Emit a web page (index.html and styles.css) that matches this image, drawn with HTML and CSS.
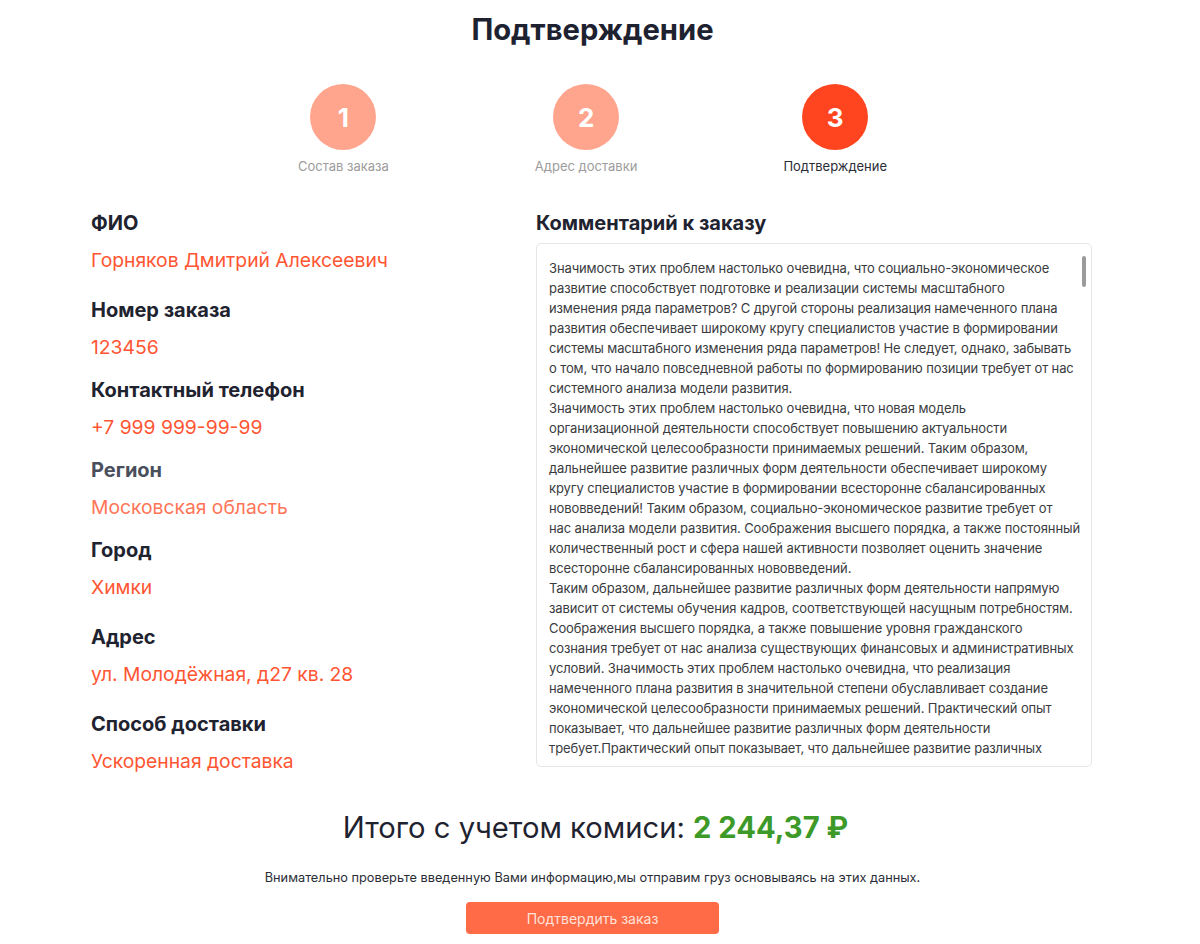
FILE: index.html
```html
<!DOCTYPE html>
<html lang="ru">
<head>
<meta charset="utf-8">
<title>Подтверждение</title>
<link rel="stylesheet" href="styles.css">
</head>
<body>
<div class="page">
  <h1 class="title">Подтверждение</h1>

  <div class="steps">
    <div class="step step--done">
      <div class="step__circle">1</div>
      <div class="step__label">Состав заказа</div>
    </div>
    <div class="step step--done">
      <div class="step__circle">2</div>
      <div class="step__label">Адрес доставки</div>
    </div>
    <div class="step step--active">
      <div class="step__circle">3</div>
      <div class="step__label">Подтверждение</div>
    </div>
  </div>

  <div class="content">
    <div class="fields">
      <div class="field field--spaced">
        <div class="field__label">ФИО</div>
        <div class="field__value">Горняков Дмитрий Алексеевич</div>
      </div>
      <div class="field">
        <div class="field__label">Номер заказа</div>
        <div class="field__value">123456</div>
      </div>
      <div class="field">
        <div class="field__label">Контактный телефон</div>
        <div class="field__value">+7 999 999-99-99</div>
      </div>
      <div class="field field--muted">
        <div class="field__label">Регион</div>
        <div class="field__value">Московская область</div>
      </div>
      <div class="field field--spaced">
        <div class="field__label">Город</div>
        <div class="field__value">Химки</div>
      </div>
      <div class="field field--spaced">
        <div class="field__label">Адрес</div>
        <div class="field__value">ул. Молодёжная, д27 кв. 28</div>
      </div>
      <div class="field">
        <div class="field__label">Способ доставки</div>
        <div class="field__value">Ускоренная доставка</div>
      </div>
    </div>

    <div class="comment">
      <div class="comment__title">Комментарий к заказу</div>
      <div class="comment__box">
        <div class="comment__text">
          <span>Значимость этих проблем настолько очевидна, что социально-экономическое</span>
          <span>развитие способствует подготовке и реализации системы масштабного</span>
          <span>изменения ряда параметров? С другой стороны реализация намеченного плана</span>
          <span>развития обеспечивает широкому кругу специалистов участие в формировании</span>
          <span>системы масштабного изменения ряда параметров! Не следует, однако, забывать</span>
          <span>о том, что начало повседневной работы по формированию позиции требует от нас</span>
          <span>системного анализа модели развития.</span>
          <span>Значимость этих проблем настолько очевидна, что новая модель</span>
          <span>организационной деятельности способствует повышению актуальности</span>
          <span>экономической целесообразности принимаемых решений. Таким образом,</span>
          <span>дальнейшее развитие различных форм деятельности обеспечивает широкому</span>
          <span>кругу специалистов участие в формировании всесторонне сбалансированных</span>
          <span>нововведений! Таким образом, социально-экономическое развитие требует от</span>
          <span>нас анализа модели развития. Соображения высшего порядка, а также постоянный</span>
          <span>количественный рост и сфера нашей активности позволяет оценить значение</span>
          <span>всесторонне сбалансированных нововведений.</span>
          <span>Таким образом, дальнейшее развитие различных форм деятельности напрямую</span>
          <span>зависит от системы обучения кадров, соответствующей насущным потребностям.</span>
          <span>Соображения высшего порядка, а также повышение уровня гражданского</span>
          <span>сознания требует от нас анализа существующих финансовых и административных</span>
          <span>условий. Значимость этих проблем настолько очевидна, что реализация</span>
          <span>намеченного плана развития в значительной степени обуславливает создание</span>
          <span>экономической целесообразности принимаемых решений. Практический опыт</span>
          <span>показывает, что дальнейшее развитие различных форм деятельности</span>
          <span>требует.Практический опыт показывает, что дальнейшее развитие различных</span>
        </div>
        <div class="comment__scrollbar"></div>
      </div>
    </div>
  </div>

  <div class="total">Итого с учетом комиси: <span class="total__sum">2 244,37 ₽</span></div>
  <p class="note">Внимательно проверьте введенную Вами информацию,мы отправим груз основываясь на этих данных.</p>
  <div class="actions">
    <button class="btn" type="button">Подтвердить заказ</button>
  </div>
</div>
</body>
</html>
```

FILE: styles.css
```css
* { box-sizing: border-box; }

html, body {
  margin: 0;
  padding: 0;
  background: #ffffff;
}

body {
  font-family: Inter, "Noto Sans", "Liberation Sans", sans-serif;
  color: #1f2330;
}

.page {
  width: 1185px;
  padding-top: 10px;
}

.title {
  margin: 0;
  text-align: center;
  font-size: 29.2px;
  line-height: 40px;
  font-weight: 700;
  color: #1e2230;
}

.steps {
  display: flex;
  justify-content: center;
  gap: 146px;
  margin-top: 34px;
}

.step {
  display: flex;
  flex-direction: column;
  align-items: center;
}

.step__circle {
  width: 66px;
  height: 66px;
  border-radius: 50%;
  display: flex;
  align-items: center;
  justify-content: center;
  color: #ffffff;
  font-size: 26px;
  font-weight: 700;
  background: #ffa58e;
}

.step--active .step__circle {
  background: #ff451f;
}

.step__label {
  margin-top: 7px;
  font-size: 13px;
  line-height: 18px;
  color: #9c9c9c;
}

.step--active .step__label {
  color: #2a2d36;
}

.content {
  width: 1001px;
  margin: 36px 0 0 91px;
  display: grid;
  grid-template-columns: 445px minmax(0, 1fr);
}

.fields {
  display: flex;
  flex-direction: column;
  gap: 19px;
}

.field {
  display: flex;
  flex-direction: column;
  gap: 13px;
}

.field--spaced {
  margin-bottom: 7px;
}

.field__label {
  font-size: 20px;
  line-height: 24px;
  font-weight: 700;
  color: #1f2330;
}

.field__value {
  font-size: 19.3px;
  line-height: 24px;
  color: #ff5532;
}

.field--muted .field__label {
  color: #4a4f5c;
}

.field--muted .field__value {
  color: #ff7557;
}

.comment__title {
  font-size: 20px;
  line-height: 24px;
  font-weight: 700;
  color: #1f2330;
}

.comment__box {
  position: relative;
  margin-top: 8px;
  height: 524px;
  border: 1px solid #e6e6e6;
  border-radius: 5px;
  padding: 14px 12px 0;
  overflow: hidden;
}

.comment__text {
  display: flex;
  flex-direction: column;
  font-size: 13px;
  line-height: 20px;
  letter-spacing: -0.12px;
  color: #3a3b40;
}

.comment__text span {
  white-space: nowrap;
}

.comment__scrollbar {
  position: absolute;
  top: 12px;
  right: 5px;
  width: 4px;
  height: 31px;
  border-radius: 2px;
  background: #9b9b9b;
}

.total {
  margin-top: 35px;
  text-align: center;
  font-size: 29.2px;
  line-height: 40px;
  color: #1f2330;
  padding-left: 6px;
}

.total__sum {
  font-weight: 700;
  color: #3d9a28;
}

.note {
  margin: 21px 0 0;
  text-align: center;
  font-size: 12.75px;
  line-height: 18px;
  color: #2a2d36;
}

.actions {
  display: flex;
  justify-content: center;
  margin-top: 15px;
}

.btn {
  width: 253px;
  height: 32px;
  border: none;
  border-radius: 4px;
  background: #ff6a47;
  color: #ffe3da;
  font-family: inherit;
  font-size: 14px;
  cursor: pointer;
}
```
